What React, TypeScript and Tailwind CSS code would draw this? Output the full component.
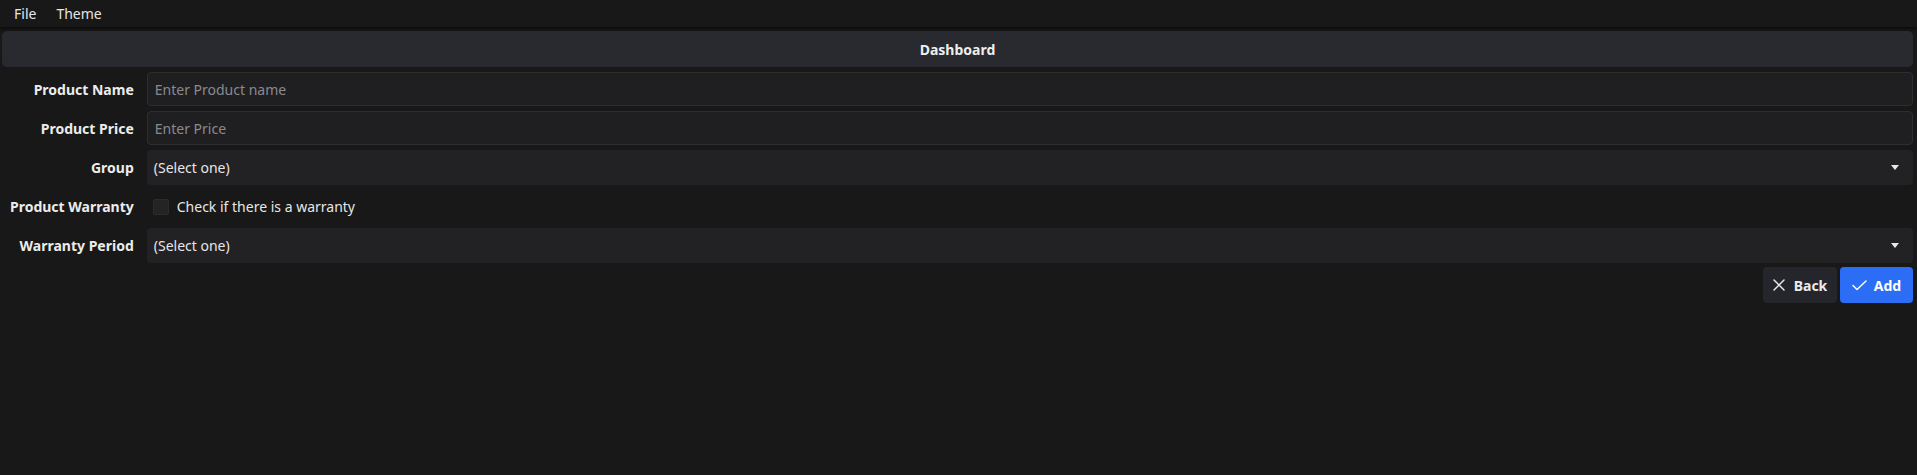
const font = { fontFamily: '"Noto Sans", "Open Sans", sans-serif' }

function Caret() {
  return (
    <svg width="8" height="5" viewBox="0 0 8 5" className="shrink-0">
      <path d="M0 0h8L4 5z" fill="#e8e8e8" />
    </svg>
  )
}

function CloseIcon() {
  return (
    <svg width="12" height="12" viewBox="0 0 12 12" className="shrink-0">
      <path d="M1 1l10 10M11 1L1 11" stroke="#e8e8e8" strokeWidth="1.5" strokeLinecap="round" fill="none" />
    </svg>
  )
}

function CheckIcon() {
  return (
    <svg width="15" height="11" viewBox="0 0 15 11" className="shrink-0">
      <path d="M1 5.5l4 4L14 1" stroke="#ffffff" strokeWidth="1.5" strokeLinecap="round" strokeLinejoin="round" fill="none" />
    </svg>
  )
}

function TextInput({ placeholder }: { placeholder: string }) {
  return (
    <div className="h-[34px] flex items-center px-[7px] rounded-[4px] bg-[#1f1f21] border border-[#2e2e31] text-[14px] text-[#8a8a8d]">
      {placeholder}
    </div>
  )
}

function Select({ value }: { value: string }) {
  return (
    <div className="h-[35px] flex items-center justify-between pl-[7px] pr-[14px] rounded-[4px] bg-[#222225] text-[14px] text-[#e6e6e6]">
      <span>{value}</span>
      <Caret />
    </div>
  )
}

function Label({ children }: { children: React.ReactNode }) {
  return <div className="text-right font-bold text-[14px] text-[#ececec] whitespace-nowrap">{children}</div>
}

export default function App() {
  return (
    <div className="w-[1917px] h-[475px] bg-[#181818] text-white overflow-hidden" style={font}>
      <div className="h-[27px] flex items-center gap-[20px] px-[14px] text-[14px] text-[#e4e4e4] bg-[#181818] shadow-[0_2px_3px_rgba(0,0,0,0.5)]">
        <span>File</span>
        <span>Theme</span>
      </div>

      <div className="pl-[2px] pr-[4px] pt-[4px]">
        <div className="h-[36px] flex items-center justify-center rounded-[5px] bg-[#292a30] text-[14px] font-bold text-[#eeeeee]">
          Dashboard
        </div>

        <div className="grid grid-cols-[auto_1fr] gap-x-[13px] gap-y-[5px] items-center mt-[5px] pl-[8px]">
          <Label>Product Name</Label>
          <TextInput placeholder="Enter Product name" />

          <Label>Product Price</Label>
          <TextInput placeholder="Enter Price" />

          <Label>Group</Label>
          <Select value="(Select one)" />

          <Label>Product Warranty</Label>
          <div className="h-[33px] flex items-center gap-[8px] pl-[6px] text-[14px] text-[#e6e6e6]">
            <span className="w-[16px] h-[16px] rounded-[2px] bg-[#242426] border border-[#2c2c2f]" />
            <span>Check if there is a warranty</span>
          </div>

          <Label>Warranty Period</Label>
          <Select value="(Select one)" />
        </div>

        <div className="flex justify-end gap-[3px] mt-[4px]">
          <button className="h-[36px] w-[74px] flex items-center justify-center gap-[9px] rounded-[4px] bg-[#25262b] text-[14px] font-bold text-[#ececec]">
            <CloseIcon />
            Back
          </button>
          <button className="h-[36px] w-[73px] flex items-center justify-center gap-[7px] rounded-[4px] bg-[#2b6ef5] text-[14px] font-bold text-white">
            <CheckIcon />
            Add
          </button>
        </div>
      </div>
    </div>
  )
}
